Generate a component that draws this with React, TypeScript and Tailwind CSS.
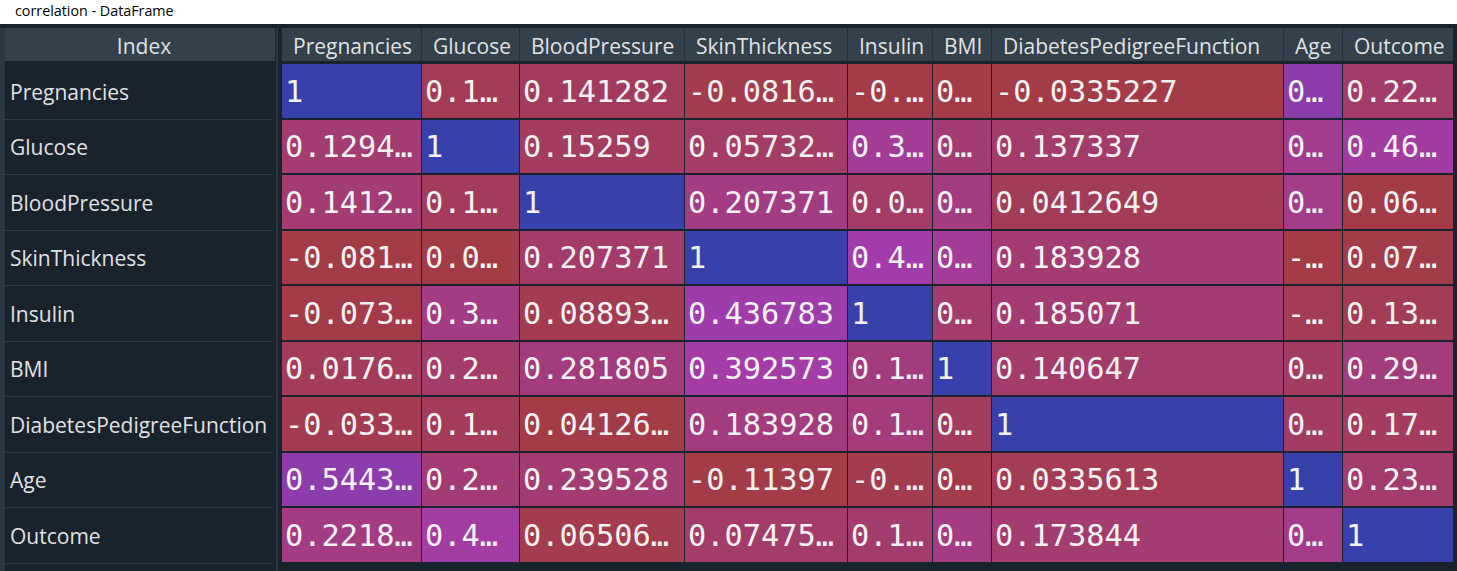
import React from 'react';

// correlation matrix of the diabetes dataset, full precision for the colour scale
const names = [
  'Pregnancies',
  'Glucose',
  'BloodPressure',
  'SkinThickness',
  'Insulin',
  'BMI',
  'DiabetesPedigreeFunction',
  'Age',
  'Outcome',
];

const values: number[][] = [
  [1, 0.129459, 0.141282, -0.081672, -0.073535, 0.017683, -0.033523, 0.544341, 0.221898],
  [0.129459, 1, 0.15259, 0.057328, 0.331357, 0.221071, 0.137337, 0.263514, 0.466581],
  [0.141282, 0.15259, 1, 0.207371, 0.088933, 0.281805, 0.041265, 0.239528, 0.065068],
  [-0.081672, 0.057328, 0.207371, 1, 0.436783, 0.392573, 0.183928, -0.11397, 0.074752],
  [-0.073535, 0.331357, 0.088933, 0.436783, 1, 0.197859, 0.185071, -0.042163, 0.130548],
  [0.017683, 0.221071, 0.281805, 0.392573, 0.197859, 1, 0.140647, 0.036242, 0.292695],
  [-0.033523, 0.137337, 0.041265, 0.183928, 0.185071, 0.140647, 1, 0.033561, 0.173844],
  [0.544341, 0.263514, 0.239528, -0.11397, -0.042163, 0.036242, 0.033561, 1, 0.238356],
  [0.221898, 0.466581, 0.065068, 0.074752, 0.130548, 0.292695, 0.173844, 0.238356, 1],
];

// what the viewer shows after eliding to the column width
const shown: string[][] = [
  ['1', '0.1…', '0.141282', '-0.0816…', '-0.…', '0…', '-0.0335227', '0…', '0.22…'],
  ['0.1294…', '1', '0.15259', '0.05732…', '0.3…', '0…', '0.137337', '0…', '0.46…'],
  ['0.1412…', '0.1…', '1', '0.207371', '0.0…', '0…', '0.0412649', '0…', '0.06…'],
  ['-0.081…', '0.0…', '0.207371', '1', '0.4…', '0…', '0.183928', '-…', '0.07…'],
  ['-0.073…', '0.3…', '0.08893…', '0.436783', '1', '0…', '0.185071', '-…', '0.13…'],
  ['0.0176…', '0.2…', '0.281805', '0.392573', '0.1…', '1', '0.140647', '0…', '0.29…'],
  ['-0.033…', '0.1…', '0.04126…', '0.183928', '0.1…', '0…', '1', '0…', '0.17…'],
  ['0.5443…', '0.2…', '0.239528', '-0.11397', '-0.…', '0…', '0.0335613', '1', '0.23…'],
  ['0.2218…', '0.4…', '0.06506…', '0.07475…', '0.1…', '0…', '0.173844', '0…', '1'],
];

const MIN_HUE = 0.66;
const HUE_RANGE = 0.33;

const hsvToRgb = (h: number, s: number, v: number) => {
  const i = Math.floor(h * 6);
  const f = h * 6 - i;
  const p = v * (1 - s);
  const q = v * (1 - f * s);
  const t = v * (1 - (1 - f) * s);
  const sets = [
    [v, t, p],
    [q, v, p],
    [p, v, t],
    [p, q, v],
    [t, p, v],
    [v, p, q],
  ];
  const [r, g, b] = sets[i % 6];
  return [Math.round(r * 255), Math.round(g * 255), Math.round(b * 255)];
};

const cellColour = (row: number, col: number) => {
  const column = values.map((r) => r[col]);
  const max = Math.max(...column);
  const min = Math.min(...column);
  const hue = MIN_HUE + (HUE_RANGE * (max - values[row][col])) / (max - min);
  const [r, g, b] = hsvToRgb(hue, 0.7, 1);
  return `rgba(${r}, ${g}, ${b}, 0.6)`;
};

const sans = "font-['Open_Sans','Noto_Sans',sans-serif]";

export default function App() {
  return (
    <div className="w-[1457px] h-[571px] overflow-hidden flex flex-col bg-[#19232d]">
      <div className={`h-[24px] bg-white flex items-center pl-[15px] pb-[3px] text-[14.3px] text-black ${sans}`}>
        correlation - DataFrame
      </div>

      <div className="flex flex-1 pt-[4px] min-h-0">
        {/* vertical header strip */}
        <div className="w-[5px] bg-[#2b3843] shrink-0" />

        {/* index */}
        <div className={`w-[270px] shrink-0 flex flex-col ${sans}`}>
          <div className="h-[33px] bg-[#32414b] flex items-center justify-center pt-[5px] pl-[8px] text-[21px] text-[#e0e1e3]">
            Index
          </div>
          <div className="pt-[3px] pr-[2px]">
            {names.map((name) => (
              <div
                key={name}
                className="h-[55.5px] border-b border-[#2f3c46] flex items-center pl-[5px] pt-[2px] text-[21px] text-[#e0e1e3] whitespace-nowrap"
              >
                {name}
              </div>
            ))}
          </div>
        </div>

        <div className="w-[2px] ml-[1px] bg-[#2b3640] shrink-0" />

        {/* table */}
        <div className="ml-[4px] flex flex-col">
          <div className={`grid grid-cols-[139px_97px_164px_162px_84px_58px_291px_58px_110px] gap-x-[1px] bg-[#232f39] ${sans}`}>
            {names.map((name) => (
              <div
                key={name}
                className="h-[33px] bg-[#32414b] flex items-center pl-[11px] pt-[5px] text-[21px] text-[#e0e1e3] whitespace-nowrap overflow-hidden"
              >
                {name}
              </div>
            ))}
          </div>
          <div className="mt-[3px] grid grid-cols-[139px_97px_164px_162px_84px_58px_291px_58px_110px] auto-rows-[53.5px] gap-x-[1px] gap-y-[2px] font-['DejaVu_Sans_Mono',monospace]">
            {shown.map((row, r) =>
              row.map((text, c) => (
                <div
                  key={`${r}-${c}`}
                  className="flex items-center pl-[3px] pt-[1px] text-[30.3px] text-[#f2f2f2] whitespace-nowrap overflow-hidden"
                  style={{ backgroundColor: cellColour(r, c) }}
                >
                  {text}
                </div>
              ))
            )}
          </div>
        </div>
      </div>
    </div>
  );
}
